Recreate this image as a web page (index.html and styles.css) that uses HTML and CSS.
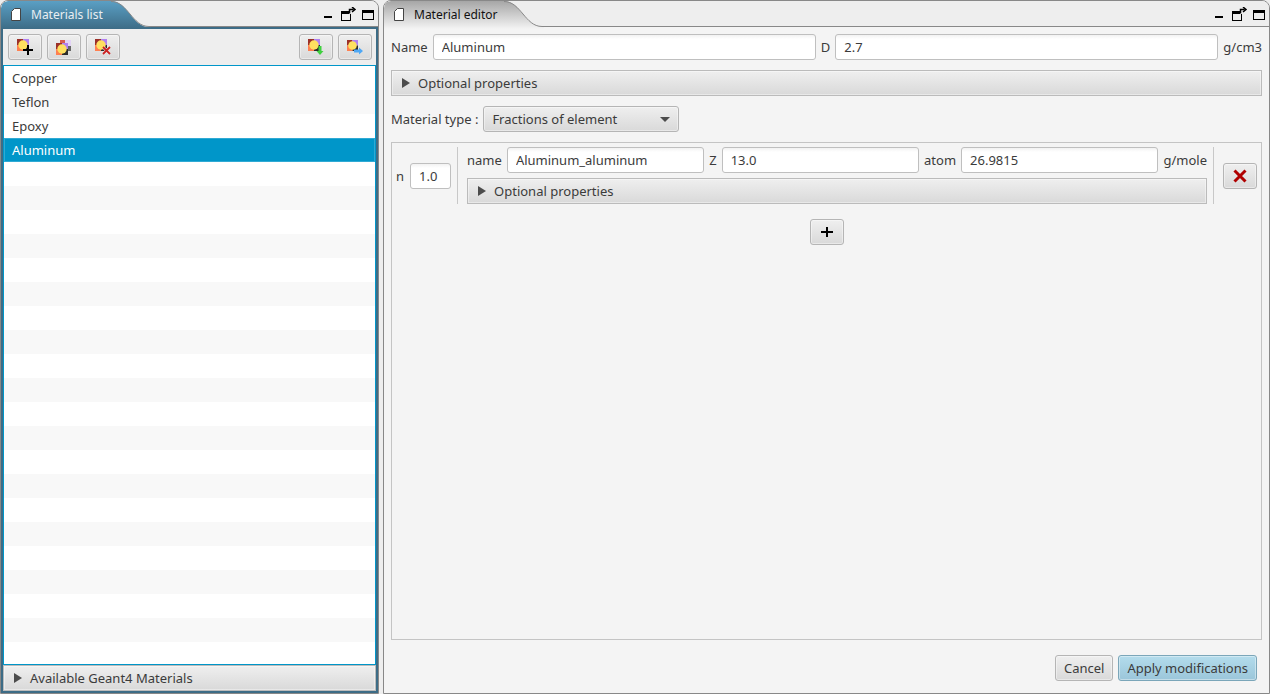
FILE: index.html
```html
<!DOCTYPE html>
<html lang="en">
<head>
    <meta charset="UTF-8">
    <meta name="viewport" content="width=device-width, initial-scale=1.0">
    <title>Materials</title>
    <link rel="stylesheet" href="styles.css">
</head>
<body>
    <!-- Shared icons -->
    <svg class="defs" width="0" height="0">
        <defs>
            <linearGradient id="tabBlue" x1="0" y1="0" x2="0" y2="1">
                <stop offset="0" stop-color="#5a9fc4"/>
                <stop offset="1" stop-color="#3d6c86"/>
            </linearGradient>
            <linearGradient id="tabGray" x1="0" y1="0" x2="0" y2="1">
                <stop offset="0" stop-color="#a6a6a6"/>
                <stop offset="1" stop-color="#f4f4f4"/>
            </linearGradient>
            <symbol id="page" viewBox="0 0 10 13">
                <path d="M3.5 .5H9.5V12.5H.5V3.5Z" fill="#fff" stroke="#444"/>
            </symbol>
            <symbol id="material" viewBox="0 0 12 12">
                <rect width="6" height="6" fill="#9c3028"/>
                <rect x="6" width="6" height="6" fill="#b080f0"/>
                <rect y="6" width="6" height="6" fill="#ff8050"/>
                <rect x="6" y="6" width="6" height="6" fill="#2c2c2c"/>
                <circle cx="6" cy="6" r="4.7" fill="#ffe060"/>
            </symbol>
            <symbol id="window-icons" viewBox="0 0 52 14">
                <path d="M1 9h8v2H1z"/>
                <path d="M18 4h8v3h2v7H18zM19 7v6h8V7z" fill-rule="evenodd"/>
                <path d="M26.500 6.500V2.500H30.500M29 0l3 2.500L29 5" fill="none" stroke="#000" stroke-width="1.500"/>
                <path d="M39 3h12v10H39zM40 6v6h10V6z" fill-rule="evenodd"/>
            </symbol>
            <symbol id="arrow" viewBox="0 0 8 10">
                <path d="M0 0L8 5L0 10Z" fill="#4c4c4c"/>
            </symbol>
        </defs>
    </svg>

    <div class="workspace">
        <section class="panel panel-active">
            <header class="panel-header">
                <div class="tab">
                    <svg class="tab-shape" width="150" height="28" viewBox="0 0 150 28">
                        <path d="M0 28V7Q0 0 7 0H110C127 0 131 26 148 26H150V28Z" fill="url(#tabBlue)"/>
                        <path d="M110 .5C127 .5 131 25.500 148 25.500H150" fill="none" stroke="#888"/>
                    </svg>
                    <svg class="tab-icon" width="10" height="13"><use href="#page"/></svg>
                    <h2 class="tab-title">Materials list</h2>
                </div>
                <div class="header-rest">
                    <svg width="52" height="14"><use href="#window-icons"/></svg>
                </div>
            </header>
            <div class="panel-body list-body">
                <div class="toolbar">
                    <button class="button icon-button" aria-label="Add material">
                        <svg width="16" height="16">
                            <use href="#material" width="12" height="12"/>
                            <path d="M11 6v10M6 11h10" stroke="#000" stroke-width="2"/>
                        </svg>
                    </button>
                    <button class="button icon-button" aria-label="Duplicate material">
                        <svg width="16" height="16">
                            <rect x="4" y="1" width="5" height="5" fill="#d85c50"/>
                            <rect x="9" y="1" width="6" height="6" fill="#e3d3f6"/>
                            <rect x="10" y="7" width="5" height="5" fill="#666"/>
                            <use href="#material" x="0" y="4" width="12" height="12"/>
                        </svg>
                    </button>
                    <button class="button icon-button" aria-label="Delete material">
                        <svg width="16" height="16">
                            <use href="#material" width="12" height="12"/>
                            <path d="M8.500 8.500l6 6M14.500 8.500l-6 6" stroke="#eee" stroke-width="3"/>
                            <path d="M8 8l7 7M15 8l-7 7" stroke="#cc2222" stroke-width="1.800"/>
                        </svg>
                    </button>
                    <span class="spacer"></span>
                    <button class="button icon-button" aria-label="Import material">
                        <svg width="16" height="16">
                            <use href="#material" width="12" height="12"/>
                            <path d="M10.500 7h3v5h2L12 16l-3.500-4h2z" fill="#3fd03f"/>
                        </svg>
                    </button>
                    <button class="button icon-button" aria-label="Export material">
                        <svg width="16" height="16">
                            <use href="#material" y="1" width="11" height="11"/>
                            <path d="M7 10.500h5v-2l4 3.500-4 3.500v-2H7z" fill="#4fa8f5"/>
                        </svg>
                    </button>
                </div>
                <ul class="material-list" role="listbox" aria-label="Materials">
                    <li role="option">Copper</li>
                    <li role="option">Teflon</li>
                    <li role="option">Epoxy</li>
                    <li class="selected" role="option" aria-selected="true">Aluminum</li>
                </ul>
                <details>
                    <summary class="pane-title"><svg width="8" height="10"><use href="#arrow"/></svg>Available Geant4 Materials</summary>
                </details>
            </div>
        </section>

        <section class="panel">
            <header class="panel-header">
                <div class="tab">
                    <svg class="tab-shape" width="160" height="28" viewBox="0 0 160 28">
                        <path d="M0 28V7Q0 0 7 0H120C137 0 141 26 158 26H160V28Z" fill="url(#tabGray)"/>
                        <path d="M120 .5C137 .5 141 25.500 158 25.500H160" fill="none" stroke="#888"/>
                    </svg>
                    <svg class="tab-icon" width="10" height="13"><use href="#page"/></svg>
                    <h2 class="tab-title">Material editor</h2>
                </div>
                <div class="header-rest">
                    <svg width="52" height="14"><use href="#window-icons"/></svg>
                </div>
            </header>
            <form class="panel-body editor-body">
                <div class="field-row">
                    <label for="name">Name</label>
                    <input class="text-field" id="name" type="text" value="Aluminum">
                    <label for="density">D</label>
                    <input class="text-field" id="density" type="text" value="2.7">
                    <span>g/cm3</span>
                </div>
                <details>
                    <summary class="pane-title"><svg width="8" height="10"><use href="#arrow"/></svg>Optional properties</summary>
                </details>
                <div class="field-row">
                    <label for="type">Material type :</label>
                    <div class="combo">
                        <select class="button" id="type">
                            <option>Fractions of element</option>
                        </select>
                        <svg class="combo-arrow" width="10" height="5"><path d="M0 0H10L5 5Z" fill="#4c4c4c"/></svg>
                    </div>
                </div>
                <div class="components">
                    <div class="component">
                        <label for="fraction">n</label>
                        <input class="text-field fraction" id="fraction" type="text" value="1.0">
                        <div class="element">
                            <div class="field-row">
                                <label for="element-name">name</label>
                                <input class="text-field" id="element-name" type="text" value="Aluminum_aluminum">
                                <label for="z">Z</label>
                                <input class="text-field" id="z" type="text" value="13.0">
                                <label for="atom">atom</label>
                                <input class="text-field" id="atom" type="text" value="26.9815">
                                <span>g/mole</span>
                            </div>
                            <details>
                                <summary class="pane-title"><svg width="8" height="10"><use href="#arrow"/></svg>Optional properties</summary>
                            </details>
                        </div>
                        <button class="button icon-button" type="button" aria-label="Remove element">
                            <svg width="16" height="16"><path d="M2.500 2.500l11 11M13.500 2.500l-11 11" stroke="#b00000" stroke-width="3"/></svg>
                        </button>
                    </div>
                    <button class="button icon-button add-button" type="button" aria-label="Add element">
                        <svg width="16" height="16"><path d="M8 3v10M2 8h12" stroke="#000" stroke-width="2"/></svg>
                    </button>
                </div>
                <div class="actions">
                    <button class="button" type="button">Cancel</button>
                    <button class="button button-default" type="button">Apply modifications</button>
                </div>
            </form>
        </section>
    </div>
</body>
</html>
```

FILE: styles.css
```css
* {
    box-sizing: border-box;
}
body {
    margin: 0;
    background-color: #eeeeee;
    color: #3b3b3b;
    font-family: "Noto Sans", sans-serif;
    font-size: 13px;
    line-height: 18px;
}
.defs {
    position: absolute;
}
svg {
    display: block;
    flex: none;
}
.workspace {
    display: grid;
    grid-template-columns: 379fr 887fr;
    gap: 4px;
    height: 100vh;
}
.panel {
    display: flex;
    flex-direction: column;
    min-width: 0;
    border: 1px solid #888;
    border-radius: 8px 8px 0 0;
    overflow: hidden;
    background-color: #f4f4f4;
}
.panel-header {
    display: flex;
    height: 26px;
    flex: none;
}
.tab {
    position: relative;
    display: flex;
    align-items: center;
    gap: 10px;
    width: 160px;
    padding-left: 10px;
    background-color: #eeeeee;
}
.panel-active .tab {
    width: 150px;
}
.tab-shape {
    position: absolute;
    top: 0;
    left: 0;
}
.tab-icon,
.tab-title {
    position: relative;
}
.tab-title {
    margin: 0;
    padding-top: 2px;
    font-size: 12px;
    font-weight: normal;
    color: #111;
}
.panel-active .tab-title {
    color: #e8eef2;
}
.header-rest {
    flex: 1;
    display: flex;
    justify-content: flex-end;
    align-items: center;
    padding-right: 3px;
    border-bottom: 1px solid #888;
    background-color: #eeeeee;
}
.panel-body {
    flex: 1;
    display: flex;
    flex-direction: column;
    min-height: 0;
}
.list-body {
    border: 2px solid #3d6c86;
    background-color: #eeeeee;
}
.toolbar {
    display: flex;
    gap: 5px;
    padding: 5px 4px 5px 5px;
}
.spacer {
    flex: 1;
}
.button {
    height: 26px;
    padding: 0 8px;
    border: 1px solid #b5b5b5;
    border-radius: 3px;
    background: linear-gradient(#efefef, #d9d9d9);
    box-shadow: inset 0 0 0 1px rgba(255, 255, 255, 0.4);
    color: #3b3b3b;
    font: inherit;
}
.icon-button {
    display: flex;
    align-items: center;
    justify-content: center;
    width: 34px;
    padding: 0;
}
.button-default {
    border-color: #7ba6b9;
    background: linear-gradient(#b3dcec, #9bc6da);
}
.material-list {
    flex: 1;
    min-height: 0;
    margin: 0;
    padding: 0;
    border: 1px solid #0096c9;
    list-style: none;
    background: repeating-linear-gradient(#fff 0 24px, #f8f8f8 24px 48px);
}
.material-list li {
    padding: 3px 8px;
}
.material-list .selected {
    background-color: #0096c9;
    box-shadow: inset 0 0 0 1px #30aad4;
    color: #fff;
}
.pane-title {
    display: flex;
    align-items: center;
    gap: 8px;
    height: 26px;
    padding: 0 10px;
    border: 1px solid #bbb;
    background: linear-gradient(#efefef, #d9d9d9);
    box-shadow: inset 0 0 0 1px rgba(255, 255, 255, 0.4);
    list-style: none;
}
.editor-body {
    gap: 10px;
    padding: 7px 7px 12px;
}
.field-row {
    display: flex;
    align-items: center;
    gap: 5px;
}
.text-field {
    flex: 1;
    min-width: 0;
    width: 0;
    height: 26px;
    padding: 0 8px;
    border: 1px solid #bfbfbf;
    border-radius: 3px;
    background: linear-gradient(#f2f2f2, #fff 4px);
    color: #3b3b3b;
    font: inherit;
}
.combo {
    position: relative;
}
.combo select {
    display: block;
    width: 196px;
    appearance: none;
}
.combo-arrow {
    position: absolute;
    top: 11px;
    right: 9px;
    pointer-events: none;
}
.components {
    flex: 1;
    padding: 4px;
    border: 1px solid #c4c4c4;
}
.component {
    display: flex;
    align-items: center;
    gap: 6px;
}
.component .fraction {
    flex: none;
    width: 41px;
}
.element {
    flex: 1;
    display: flex;
    flex-direction: column;
    gap: 5px;
    min-width: 0;
    margin-right: 3px;
    padding: 0 6px 0 9px;
    border: solid #c8c8c8;
    border-width: 0 1px;
}
.add-button {
    margin: 15px auto 0;
}
.actions {
    display: flex;
    justify-content: flex-end;
    gap: 5px;
    padding: 5px 5px 0;
}
```
